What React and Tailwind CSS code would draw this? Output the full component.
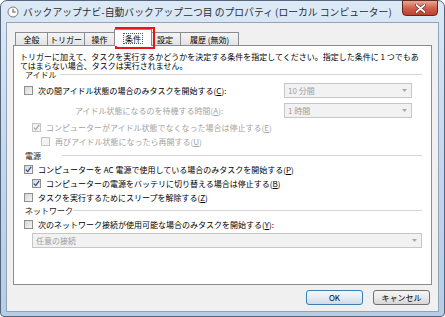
import clsx from 'clsx';

const FONT = "font-['Noto_Sans_CJK_JP','Noto_Sans',sans-serif]";

function Check({ checked, disabled }) {
  return (
    <span
      className={clsx(
        'w-[9px] h-[9px] border flex items-center justify-center shrink-0',
        disabled
          ? 'border-[#c4c4c4] bg-[#f3f3f3]'
          : 'border-[#8e8f8f] bg-gradient-to-br from-[#d6d6d6] to-[#f6f6f6]'
      )}
    >
      {checked && (
        <svg width="7" height="7" viewBox="0 0 7 7">
          <path
            d="M0.8 3.6 L2.7 5.6 L6.2 0.9"
            stroke={disabled ? '#a8a8a8' : '#2f4e96'}
            strokeWidth="1.3"
            fill="none"
          />
        </svg>
      )}
    </span>
  );
}

function Key({ k }) {
  return (
    <>
      (<span className="underline underline-offset-[1px]">{k}</span>)
    </>
  );
}

function CheckRow({ indent, checked, disabled, children }) {
  return (
    <div className={clsx('h-[14px] flex items-center', indent)}>
      <Check checked={checked} disabled={disabled} />
      <span className={clsx('ml-[5px] whitespace-nowrap', disabled ? 'text-[#a3a3a3]' : 'text-black')}>
        {children}
      </span>
    </div>
  );
}

function Combo({ text, className }) {
  return (
    <div
      className={clsx(
        'h-[15px] border border-[#c6c6c6] bg-[#f2f2f2] flex items-center pl-[3px] pr-[4px] text-[#9d9d9d]',
        className
      )}
    >
      <span className="flex-1 whitespace-nowrap">{text}</span>
      <svg width="5" height="3" viewBox="0 0 5 3">
        <path d="M0 0 H5 L2.5 3 Z" fill="#a8a8a8" />
      </svg>
    </div>
  );
}

function Group({ label, labelWidth }) {
  return (
    <div className="h-[9px] flex items-center pl-[5px] pr-[9px]">
      <span className={clsx('whitespace-nowrap text-[#1a1a1a]', labelWidth)}>{label}</span>
      <div className="flex-1 h-px bg-[#d3d6d9]" />
    </div>
  );
}

const TABS = [
  { label: '全般', w: 'w-[33px]' },
  { label: 'トリガー', w: 'w-[38px]' },
  { label: '操作', w: 'w-[31px]' },
  { label: '条件', w: 'w-[38px]', active: true },
  { label: '設定', w: 'w-[32px]' },
  { label: '履歴 (無効)', w: 'w-[59px]' },
];

export default function App() {
  return (
    <div className={clsx('w-[445px] h-[317px] bg-white text-[8px] leading-[9px]', FONT)}>
      <div className="h-[317px] rounded-t-[7px] rounded-b-[4px] border border-[#55667a] bg-gradient-to-b from-[#dce9f6] via-[#c3d7ee] to-[#b7cde6] flex flex-col px-[5px] pb-[4px]">
        {/* Title bar */}
        <div className="h-[21px] flex items-center relative">
          <svg width="12" height="12" viewBox="0 0 12 12" className="ml-[1px] mt-[1px]">
            <circle cx="6" cy="6" r="5" fill="#fbfbfb" stroke="#7c7c7c" strokeWidth="1" />
            <path d="M6 2.8 V6 H8.6" stroke="#555" strokeWidth="1" fill="none" />
            <circle cx="6" cy="6" r="0.8" fill="#d07a2a" />
          </svg>
          <span className="ml-[4px] text-[9.8px] leading-[12px] text-[#2a2f36] whitespace-nowrap">
            バックアップナビ-自動バックアップ二つ目 のプロパティ (ローカル コンピューター)
          </span>
          {/* Close button */}
          <div className="absolute right-[1px] top-[-1px] w-[36px] h-[16px] rounded-b-[4px] border border-[#5e2a22] bg-gradient-to-b from-[#e9a89a] via-[#d0604c] to-[#c2402b] flex items-center justify-center">
            <svg width="11" height="9" viewBox="0 0 11 9">
              <path d="M1.5 1 L9.5 8 M9.5 1 L1.5 8" stroke="#5a2a22" strokeWidth="3" strokeLinecap="round" />
              <path d="M1.5 1 L9.5 8 M9.5 1 L1.5 8" stroke="#ffffff" strokeWidth="1.7" strokeLinecap="round" />
            </svg>
          </div>
        </div>

        {/* Client area */}
        <div className="flex-1 border border-[#8fa3bb] bg-[#f0f0f0] flex flex-col px-[6px]">
          {/* Tabs */}
          <div className="mt-[6px] h-[16px] flex items-end pl-[2px] relative z-10">
            {TABS.map((t, i) => (
              <div
                key={t.label}
                className={clsx(
                  'border border-[#898c95] border-b-0 flex items-center justify-center text-black whitespace-nowrap',
                  t.w,
                  i > 0 && '-ml-px',
                  t.active
                    ? 'h-[17px] -mb-px bg-white relative z-10 -mx-[2px]'
                    : 'h-[13px] bg-gradient-to-b from-[#f4f4f4] to-[#e3e3e3]'
                )}
              >
                <span className={clsx(t.active && 'outline outline-1 outline-dotted outline-[#555] px-[1px]')}>{t.label}</span>
              </div>
            ))}
            {/* red annotation box */}
            <div className="absolute left-[102px] top-[-2px] w-[40px] h-[22px] border-2 border-[#e8141a]" />
          </div>

          {/* Panel */}
          <div className="h-[240px] border border-[#898c95] bg-white flex flex-col pl-[6px] pt-[6px]">
            <div className="text-black">
              <div className="whitespace-nowrap">トリガーに加えて、タスクを実行するかどうかを決定する条件を指定してください。指定した条件に 1 つでもあ</div>
              <div className="whitespace-nowrap">てはまらない場合、タスクは実行されません。</div>
            </div>

            <Group label="アイドル" labelWidth="w-[35px]" />

            <div className="mt-[4px] h-[15px] flex items-center pl-[4px]">
              <Check />
              <span className="ml-[5px] whitespace-nowrap text-black flex-1">
                次の間アイドル状態の場合のみタスクを開始する<Key k="C" />:
              </span>
              <Combo text="10 分間" className="w-[128px] mr-[19px]" />
            </div>

            <div className="mt-[5px] h-[15px] flex items-center pl-[55px]">
              <span className="whitespace-nowrap text-[#a3a3a3] flex-1">
                アイドル状態になるのを待機する時間<Key k="A" />:
              </span>
              <Combo text="1 時間" className="w-[128px] mr-[19px]" />
            </div>

            <div className="mt-[2px]">
              <CheckRow indent="pl-[12px]" checked disabled>
                コンピューターがアイドル状態でなくなった場合は停止する<Key k="E" />
              </CheckRow>
              <CheckRow indent="pl-[21px]" disabled>
                再びアイドル状態になったら再開する<Key k="U" />
              </CheckRow>
            </div>

            <div className="mt-[3px]">
              <Group label="電源" labelWidth="w-[37px]" />
            </div>

            <div className="mt-[2px]">
              <CheckRow indent="pl-[4px]" checked>
                コンピューターを AC 電源で使用している場合のみタスクを開始する<Key k="P" />
              </CheckRow>
              <CheckRow indent="pl-[12px]" checked>
                コンピューターの電源をバッテリに切り替える場合は停止する<Key k="B" />
              </CheckRow>
              <CheckRow indent="pl-[4px]">
                タスクを実行するためにスリープを解除する<Key k="Z" />
              </CheckRow>
            </div>

            <div className="mt-[2px]">
              <Group label="ネットワーク" labelWidth="w-[48px]" />
            </div>

            <div className="mt-[2px]">
              <CheckRow indent="pl-[4px]">
                次のネットワーク接続が使用可能な場合のみタスクを開始する<Key k="Y" />:
              </CheckRow>
            </div>

            <div className="mt-[2px] pl-[12px] pr-[9px]">
              <Combo text="任意の接続" className="w-full" />
            </div>
          </div>

          {/* Buttons */}
          <div className="mt-[5px] flex justify-end gap-[10px] pr-[2px]">
            <button className="w-[57px] h-[15px] rounded-[3px] border border-[#3b7eb3] bg-gradient-to-b from-[#f3f7fb] via-[#e4ecf4] to-[#cfdbe7] text-black flex items-center justify-center leading-[9px]">
              OK
            </button>
            <button className="w-[57px] h-[15px] rounded-[3px] border border-[#707070] bg-gradient-to-b from-[#f5f5f5] via-[#e9e9e9] to-[#d6d6d6] text-black flex items-center justify-center leading-[9px]">
              キャンセル
            </button>
          </div>
        </div>
      </div>
    </div>
  );
}
